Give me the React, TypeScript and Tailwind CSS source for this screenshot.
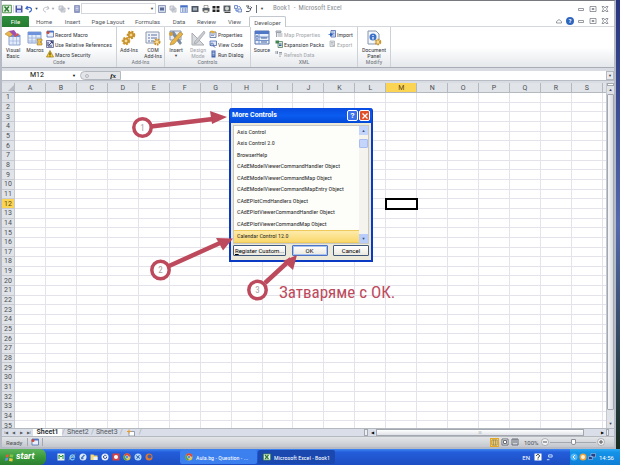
import { useState } from "react";
import type { ReactNode } from "react";
import clsx from "clsx";

const COLUMNS = "ABCDEFGHIJKLMNOPQRS".split("");
const ROWS = Array.from({ length: 35 }, (_, i) => i + 1);

const CONTROLS = [
  "Axis Control",
  "Axis Control 2.0",
  "BrowserHelp",
  "CAdEModelViewerCommandHandler Object",
  "CAdEModelViewerCommandMap Object",
  "CAdEModelViewerCommandMapEntry Object",
  "CAdEPlotCmdHandlers Object",
  "CAdEPlotViewerCommandHandler Object",
  "CAdEPlotViewerCommandMap Object",
  "Calendar Control 12.0",
];

const TABS = [
  { name: "Home", width: "w-[30px]" },
  { name: "Insert", width: "w-[27px]" },
  { name: "Page Layout", width: "w-[44px]" },
  { name: "Formulas", width: "w-[35px]" },
  { name: "Data", width: "w-[28px]" },
  { name: "Review", width: "w-[27px]" },
  { name: "View", width: "w-[29px]" },
  { name: "Developer", width: "w-[37px]" },
];

function Icon({ size = "size-2", children }: { size?: string; children: ReactNode }) {
  return (
    <svg viewBox="0 0 16 16" className={clsx(size, "shrink-0")} fill="none" aria-hidden="true">
      {children}
    </svg>
  );
}

/* Iconos */
const excelIcon = (
  <>
    <path d="M1 2h14v12H1z" fill="#e8f3e4" stroke="#4c8f4a" strokeWidth="1.5" />
    <path d="M4 4l7 8M11 4l-7 8" stroke="#2d7d35" strokeWidth="2.5" />
  </>
);
const saveIcon = (
  <>
    <path d="M1 1h13l1 2v12H1z" fill="#4a55a8" />
    <path d="M4 1h8v6H4z" fill="#e4e8fa" />
    <path d="M4 10h8v5H4z" fill="#c9cfee" />
  </>
);
const undoIcon = <path d="M5 2L2 7l5 2M3 7c5-5 11-1 10 3-1 3-3 4-5 4" stroke="#3f69c4" strokeWidth="2.5" />;
const redoIcon = <path d="M11 2l3 5-5 2M13 7C8 2 2 6 3 10c1 3 3 4 5 4" stroke="#b9bec6" strokeWidth="2" />;
const pageIcon = (
  <>
    <path d="M3 1h10v14H3z" fill="#8b98c4" stroke="#5c6b9e" />
    <path d="M5 4h6M5 7h6M5 10h6" stroke="#e6eaf8" strokeWidth="1.5" />
  </>
);
const groupIcon = (
  <>
    <path d="M2 2h8v8H2zM6 6h8v8H6z" fill="#e4e6ea" stroke="#a8adb7" strokeWidth="1.5" />
    <path d="M8 10h4" stroke="#a8adb7" strokeWidth="1.5" />
  </>
);
const formIcon = (
  <>
    <path d="M1 1h14v14H1z" fill="#d5dded" stroke="#7383a8" strokeWidth="1.5" />
    <path d="M4 5h8v6H4z" fill="#5a6c96" />
  </>
);
const tableIcon = (
  <>
    <path d="M1 1h14v14H1z" fill="#e5edfb" stroke="#5577c0" />
    <path d="M1 1h14v4H1z" fill="#456fc6" />
    <path d="M4 8h3M9 8h4M4 12h3M9 12h4" stroke="#4462a5" strokeWidth="2" />
  </>
);
const darkIcon = (
  <>
    <path d="M1 2h14v12H1z" fill="#4c5563" />
    <path d="M4 5h8v6H4z" fill="#a5b0bd" />
  </>
);
const printIcon = (
  <>
    <path d="M4 1h8v5H4z" fill="#fff" stroke="#555" />
    <path d="M1 6h14v7H1z" fill="#59616b" />
    <path d="M4 10h8v5H4z" fill="#e9e9dc" stroke="#555" />
  </>
);
const tilesIcon = <path d="M1 2h6v5H1zM9 2h6v5H9zM1 9h6v5H1zM9 9h6v5H9z" fill="#222" />;
const cameraIcon = (
  <>
    <path d="M1 1h14v12H1z" fill="#555c62" />
    <circle cx="8" cy="7" r="4" fill="#d0d3cf" />
    <path d="M3 15h12" stroke="#444" strokeWidth="2" />
  </>
);
const codeIcon = (
  <>
    <path d="M1 1h6v6H1zM8 8h7v6H8z" fill="#e8eefc" stroke="#5372b8" strokeWidth="1.5" />
    <path d="M9 3c4 0 4 2 4 4M4 8v4h4" stroke="#4b77cc" strokeWidth="2" />
  </>
);
const traceIcon = <path d="M2 2h6L5 6l7 1-3 6M2 13h6M11 3l3 3" stroke="#555b66" strokeWidth="2" />;
const recordIcon = (
  <>
    <path d="M2 2h13v12H2z" fill="#e9f0fc" stroke="#4767ad" strokeWidth="1.5" />
    <path d="M2 2h13v3H2z" fill="#4c74c6" />
    <circle cx="4" cy="5" r="3" fill="#cc4a3b" />
  </>
);
const relativeIcon = (
  <>
    <path d="M1 1h14v14H1z" fill="#d9def0" stroke="#565b85" strokeWidth="1.5" />
    <path d="M4 4v8h8M6 10l6-6M9 3h4v4" stroke="#3a4274" strokeWidth="2" />
  </>
);
const warningIcon = (
  <>
    <path d="M8 1l7 13H1z" fill="#f7cf3c" stroke="#9f7d13" strokeWidth="1.5" />
    <path d="M8 5v5M8 11v2" stroke="#3b3208" strokeWidth="2" />
  </>
);
const propertiesIcon = (
  <>
    <path d="M2 4h12v11H2z" fill="#eef2fb" stroke="#566a95" strokeWidth="1.5" />
    <path d="M4 8h8M4 11h6" stroke="#677ba8" strokeWidth="1.5" />
    <path d="M1 3l5-2 8 3-6 3z" fill="#e2ac3a" />
  </>
);
const viewCodeIcon = (
  <>
    <path d="M2 2h13v9H2z" fill="#dfe8fa" stroke="#4261a8" strokeWidth="1.5" />
    <circle cx="6" cy="9" r="3" fill="#aebfe5" stroke="#344f91" />
    <path d="M8 11l4 4" stroke="#344f91" strokeWidth="2" />
  </>
);
const runIcon = (
  <>
    <path d="M5 1h8v14H5z" fill="#4667ae" />
    <path d="M7 4h4M7 7h4M7 10h4" stroke="#dbe5fb" strokeWidth="1.5" />
  </>
);
const mapIcon = <path d="M2 2h10v3H2zM5 8h10M5 12h10M3 5v9" fill="#ccd0d6" stroke="#9ca3ad" strokeWidth="2" />;
const packIcon = (
  <>
    <path d="M6 3h9v12H6z" fill="#dce9dc" stroke="#53795e" strokeWidth="1.5" />
    <path d="M1 1h7v6H1z" fill="#3f8451" />
    <path d="M8 8h5M8 11h5" stroke="#315e9c" strokeWidth="2" />
  </>
);
const refreshIcon = <path d="M2 2v6M5 2v6M8 5h6M8 8h6M10 11v3" stroke="#959ca6" strokeWidth="2" />;
const importIcon = (
  <>
    <path d="M6 1h9v13H6z" fill="#e3ebfa" stroke="#3f5fa6" strokeWidth="1.5" />
    <path d="M8 4h5M8 7h5M8 10h5" stroke="#5f7cba" strokeWidth="1.5" />
    <path d="M1 9h6M5 6l4 3-4 3z" fill="#2860bb" stroke="#2860bb" strokeWidth="1.5" />
  </>
);
const exportIcon = (
  <path d="M4 2h9v11H4zM6 5h5M6 8h5M9 11h5" fill="#e3e5e8" stroke="#a7acb4" strokeWidth="1.5" />
);
const vbIcon = (
  <>
    <path d="M4 5h11v10H4z" fill="#e3ecfb" stroke="#8ba0cb" />
    <path d="M4 5h11v2H4z" fill="#6f92dc" />
    <path d="M8 7v8M11.5 7v8M4 11h11" stroke="#9db2dd" strokeWidth=".7" />
    <path d="M0 4l4-3 4 3-3 3z" fill="#e9b64a" stroke="#a87c28" strokeWidth=".5" />
    <path d="M4 1l5-1 3 4-3 2z" fill="#a04eb0" />
    <path d="M9 6l4-3 1 2-4 2z" fill="#d3564a" />
  </>
);
const macrosIcon = (
  <>
    <path d="M1 2h13v11H1z" fill="#e3ecfb" stroke="#8ba0cb" />
    <path d="M1 2h13v3H1z" fill="#6f92dc" />
    <path d="M5 5v8M9 5v8M1 8h13M1 11h13" stroke="#93abd6" strokeWidth=".7" />
    <path d="M10 9h5v2l-2 1 2 1v2h-5l1-3z" fill="#efc04a" stroke="#9b7a2b" strokeWidth=".6" />
  </>
);
const gearsIcon = (
  <>
    <circle cx="10" cy="5" r="3.2" fill="#f2d48a" stroke="#c6902b" strokeWidth="2.2" strokeDasharray="2 1" />
    <circle cx="10" cy="5" r="2.2" stroke="#c6902b" strokeWidth="1.5" />
    <circle cx="5" cy="11" r="3.2" fill="#f4dca0" stroke="#d1a03c" strokeWidth="2.2" strokeDasharray="2 1" />
    <circle cx="5" cy="11" r="2.2" stroke="#c6902b" strokeWidth="1.5" />
  </>
);
const comIcon = (
  <>
    <path d="M1 2h13v11H1z" fill="#f1f4fa" stroke="#8c98ad" />
    <path d="M3 5h2M3 8h2M3 11h2M6 5h6M6 8h6M6 11h3" stroke="#5c73a3" />
    <circle cx="12" cy="12" r="2.5" fill="#f5dc9c" stroke="#c6902b" strokeWidth="2" strokeDasharray="1.6 .8" />
  </>
);
const toolsIcon = (
  <>
    <path d="M2 1h11v9H2z" fill="#e8edf6" stroke="#8996ae" />
    <path d="M2 2l4-1 8 12-2 2z" fill="#7d8ca5" />
    <path d="M12 2l3 2-9 10-4 1 1-3z" fill="#e8b446" stroke="#a67f2b" strokeWidth=".6" />
    <circle cx="3" cy="4" r="2" fill="#d6a038" />
  </>
);
const designIcon = (
  <>
    <path d="M2 3v12h12z" fill="#d9dbde" stroke="#a8abb0" />
    <path d="M5 9v3h3z" fill="#fff" />
    <path d="M14 1L5 11l-1 3 3-1 8-10z" fill="#c8cbd0" stroke="#a0a4aa" strokeWidth=".7" />
  </>
);
const sourceIcon = (
  <>
    <path d="M1 1h14v13H1z" fill="#eaf1fd" stroke="#5673ad" />
    <path d="M1 1h14v3H1z" fill="#4f78c6" />
    <path d="M5 4v10M1 7h14M1 10.5h14" stroke="#7794cb" />
    <path d="M7 8h6M7 12h6M2 6h2M2 9h2" stroke="#40609f" />
  </>
);
const documentIcon = (
  <>
    <path d="M2 1h8l3 3v10H2z" fill="#f4f7fc" stroke="#8593ad" />
    <circle cx="7" cy="7" r="3.5" fill="#3e72c9" />
    <path d="M7 5v1M7 7v2.5" stroke="#fff" strokeWidth="1.2" />
    <circle cx="12" cy="12" r="2.3" fill="#f5dc9c" stroke="#c9972f" strokeWidth="2" strokeDasharray="1.6 .7" />
  </>
);

function BigButton({ icon, lines, arrow, disabled, width }: {
  icon: ReactNode;
  lines: string[];
  arrow?: boolean;
  disabled?: boolean;
  width: string;
}) {
  return (
    <button
      disabled={disabled}
      className={clsx("flex shrink-0 flex-col items-center leading-[6px] whitespace-nowrap", width, disabled && "text-[#a6a9ae]")}
    >
      <span className="mb-px flex h-[17px] items-center">
        <Icon size="size-4">{icon}</Icon>
      </span>
      {lines.map((line) => (
        <span key={line}>{line}</span>
      ))}
      {arrow && <span className="text-[4px]">▼</span>}
    </button>
  );
}

function SmallButton({ icon, label, disabled }: { icon: ReactNode; label: string; disabled?: boolean }) {
  return (
    <button
      disabled={disabled}
      className={clsx("flex h-[10px] items-center gap-px whitespace-nowrap", disabled && "text-[#a6a9ae]")}
    >
      <Icon>{icon}</Icon>
      {label}
    </button>
  );
}

function Group({ title, width, children }: { title: string; width: string; children: ReactNode }) {
  return (
    <section className={clsx("flex shrink-0 flex-col border-r border-[#cdd1d8]", width)}>
      <div className="flex flex-1 gap-[2px] pt-[2px]">{children}</div>
      <h2 className="h-[8px] text-center leading-[6px] text-[#73777e]">{title}</h2>
    </section>
  );
}

function TitleBar() {
  return (
    <div className="flex h-[15px] items-center pr-1">
      <div className="flex w-[79px] items-center">
        <Icon size="size-[10px]">{excelIcon}</Icon>
        <span className="mx-px h-2 w-px bg-gray-300" />
        <Icon>{saveIcon}</Icon>
        <span className="w-[3px]" />
        <Icon>{undoIcon}</Icon>
        <span className="mx-px text-[4px] text-gray-700">▼</span>
        <span className="w-[3px]" />
        <Icon>{redoIcon}</Icon>
        <span className="mx-px text-[4px] text-gray-400">▼</span>
        <span className="w-[3px]" />
        <Icon>{groupIcon}</Icon>
        <span className="text-[4px] text-gray-400">▼</span>
        <span className="w-[3px]" />
        <Icon>{pageIcon}</Icon>
      </div>
      <label className="relative flex">
        <select aria-label="Font" className="h-[11px] w-[75px] appearance-none border border-[#d3d6db] bg-white">
          <option></option>
        </select>
        <span className="pointer-events-none absolute top-[3px] right-[2px] text-[4px]">▼</span>
      </label>
      <div className="ml-[2px] flex w-[106px] items-center justify-between">
        {[formIcon, groupIcon, tableIcon, darkIcon, printIcon, tilesIcon, cameraIcon, codeIcon, traceIcon].map((icon, i) => (
          <button key={i} aria-label={`Quick command ${i + 1}`}>
            <Icon>{icon}</Icon>
          </button>
        ))}
        <span className="h-2 w-px bg-gray-500" />
        <span className="text-[4px]">▼</span>
      </div>
      <h1 className="ml-[9px] flex-1 font-['Roboto_Condensed','Roboto',sans-serif] text-[7px] whitespace-pre text-[#8b8e94]">
        Book1  -  Microsoft Excel
      </h1>
      <WindowButtons />
    </div>
  );
}

function WindowButtons() {
  return (
    <div className="flex gap-[4px] pr-px">
      <button aria-label="Minimize">
        <Icon><path d="M3 7h10v4H3z" stroke="#777b83" strokeWidth="1.5" /></Icon>
      </button>
      <button aria-label="Restore">
        <Icon><path d="M2 3h12v10H2zM6 7h4v2H6z" stroke="#777b83" strokeWidth="1.5" /></Icon>
      </button>
      <button aria-label="Close">
        <Icon><path d="M2 3h4l2 3 2-3h4l-3 5 3 5h-4l-2-3-2 3H2l3-5z" stroke="#777b83" strokeWidth="1.5" /></Icon>
      </button>
    </div>
  );
}

function TabBar() {
  return (
    <nav className="flex h-[11px] text-[#55585e]">
      <button className="w-[27px] rounded-t-[1px] bg-linear-to-b from-[#2f8f3f] to-[#257c31] text-white">File</button>
      {TABS.map((tab) => (
        <button
          key={tab.name}
          className={clsx(
            "whitespace-nowrap",
            tab.width,
            tab.name === "Developer"
              ? "rounded-t-[2px] border border-b-0 border-[#c3c7ce] bg-white"
              : "border-b border-[#d4d7dc]",
          )}
        >
          {tab.name}
        </button>
      ))}
      <div className="flex flex-1 items-center justify-end gap-[3px] border-b border-[#d4d7dc] pr-1">
        <Icon><path d="M3 9l5-4 5 4v3H3z" stroke="#777b83" strokeWidth="1.5" /></Icon>
        <button aria-label="Help" className="size-2 rounded-full bg-[#2f66bd] text-center leading-2 font-bold text-white">?</button>
        <WindowButtons />
      </div>
    </nav>
  );
}

function Ribbon() {
  return (
    <div className="flex h-[41px] border-b border-[#a9adb5] bg-linear-to-b from-white from-50% to-[#e5e8ec] font-['Roboto_Condensed','Roboto',sans-serif]">
      <Group title="Code" width="w-[115px]">
        <BigButton icon={vbIcon} lines={["Visual", "Basic"]} width="w-[22px]" />
        <BigButton icon={macrosIcon} lines={["Macros"]} width="w-[18px]" />
        <div>
          <SmallButton icon={recordIcon} label="Record Macro" />
          <SmallButton icon={relativeIcon} label="Use Relative References" />
          <SmallButton icon={warningIcon} label="Macro Security" />
        </div>
      </Group>
      <Group title="Add-Ins" width="w-[48px]">
        <BigButton icon={gearsIcon} lines={["Add-Ins"]} width="w-[24px]" />
        <BigButton icon={comIcon} lines={["COM", "Add-Ins"]} width="w-[20px]" />
      </Group>
      <Group title="Controls" width="w-[86px]">
        <BigButton icon={toolsIcon} lines={["Insert"]} width="w-[22px]" arrow />
        <BigButton icon={designIcon} lines={["Design", "Mode"]} width="w-[18px]" disabled />
        <div>
          <SmallButton icon={propertiesIcon} label="Properties" />
          <SmallButton icon={viewCodeIcon} label="View Code" />
          <SmallButton icon={runIcon} label="Run Dialog" />
        </div>
      </Group>
      <Group title="XML" width="w-[107px]">
        <BigButton icon={sourceIcon} lines={["Source"]} width="w-[22px]" />
        <div className="w-[51px]">
          <SmallButton icon={mapIcon} label="Map Properties" disabled />
          <SmallButton icon={packIcon} label="Expansion Packs" />
          <SmallButton icon={refreshIcon} label="Refresh Data" disabled />
        </div>
        <div>
          <SmallButton icon={importIcon} label="Import" />
          <SmallButton icon={exportIcon} label="Export" disabled />
        </div>
      </Group>
      <Group title="Modify" width="w-[33px]">
        <BigButton icon={documentIcon} lines={["Document", "Panel"]} width="w-full" />
      </Group>
    </div>
  );
}

function FormulaBar() {
  return (
    <div className="mt-[3px] mb-[2px] flex h-[10px] border-b border-[#b8bcc4] bg-white">
      <input aria-label="Name box" defaultValue="M12" className="w-[70px] text-center text-[7px] text-black outline-none" />
      <span className="w-2 text-[4px] leading-[10px] text-black">▼</span>
      <div className="flex w-[41px] items-center justify-between rounded-l-full border border-[#b4b8bf] bg-[#e3e5e9] px-1">
        <span className="size-1 rounded-full border border-[#b4b8bf]" />
        <span className="font-['Liberation_Serif'] text-[7px] leading-[8px] font-bold text-black italic">fx</span>
      </div>
      <input aria-label="Formula" className="min-w-0 flex-1 outline-none" />
      <button aria-label="Expand formula bar" className="w-2 border border-[#b4b8bf] bg-[#e8eaee] text-[4px] leading-2">▼</button>
    </div>
  );
}

function Sheet() {
  return (
    <div className="flex min-h-0 flex-1 overflow-hidden">
      <div className="min-w-0 flex-1 overflow-hidden bg-white">
        <table className="h-[348px] w-full table-fixed border-separate border-spacing-0 text-center text-[7px] leading-[8px] text-[#4a4e55]">
          <thead>
            <tr>
              <th className="h-[10px] w-[13px] border-r border-b border-[#b4b8bf] bg-[#e0e3e7] p-0">
                <svg viewBox="0 0 6 6" className="ml-auto size-[6px]"><path d="M6 0v6H0z" fill="#b6bac2" /></svg>
              </th>
              {COLUMNS.map((col) => (
                <th
                  key={col}
                  scope="col"
                  className={clsx(
                    "h-[10px] border-r border-b border-[#b4b8bf] p-0 font-normal",
                    col === "M" ? "bg-[#fcd453] text-[#5b4710]" : "bg-[#e0e3e7]",
                  )}
                >
                  {col}
                </th>
              ))}
              <th className="w-[3px] border-b border-[#b4b8bf] bg-[#e0e3e7] p-0" />
            </tr>
          </thead>
          <tbody>
            {ROWS.map((row) => (
              <tr key={row}>
                <th
                  scope="row"
                  className={clsx(
                    "border-r border-b border-[#c6cad0] p-0 font-normal",
                    row === 12 ? "bg-[#fcd453] text-[#5b4710]" : "bg-[#e0e3e7]",
                  )}
                >
                  {row}
                </th>
                {COLUMNS.map((col) => (
                  <td
                    key={col}
                    className={clsx(
                      "border-r border-b border-[#e4e3eb] p-0",
                      row === 12 && col === "M" && "outline-2 -outline-offset-1 outline-black",
                    )}
                  />
                ))}
                <td className="border-b border-[#e4e3eb] p-0" />
              </tr>
            ))}
          </tbody>
        </table>
      </div>
      <div className="flex w-2 flex-col items-center border-l border-[#c3c7ce] bg-[#dfe2e7] text-[4px] leading-[8px]">
        <span className="h-[3px] w-full border border-[#a3a8b0] bg-white" />
        <span>▲</span>
        <span className="w-full flex-1 rounded-[1px] border border-[#a3a8b0] bg-linear-to-r from-[#f6f7f8] to-[#d9dce1]" />
        <span className="mt-[10px]">▼</span>
      </div>
    </div>
  );
}

function SheetTabs() {
  return (
    <div className="flex h-[8px] items-center border-t border-[#b4b8bf] bg-[#d9dee8] text-[7px] leading-[7px] text-[#555961]">
      <div className="flex w-[31px] justify-around text-[4px]">
        <span>|◀</span>
        <span>◀</span>
        <span>▶</span>
        <span>▶|</span>
      </div>
      <button className="h-full w-[29px] bg-white font-bold text-[#33363b]">Sheet1</button>
      <span className="text-[#a3a8b0]">/</span>
      <button className="w-[26px]">Sheet2</button>
      <span className="text-[#a3a8b0]">/</span>
      <button className="w-[26px]">Sheet3</button>
      <span className="text-[#a3a8b0]">/</span>
      <button aria-label="Insert sheet" className="mx-[4px]">
        <Icon>
          <path d="M4 5h11v9H4z" fill="#fff" stroke="#7584a3" strokeWidth="1.5" />
          <path d="M4 1v8M0 5h8" stroke="#e59b2e" strokeWidth="2" />
        </Icon>
      </button>
      <span className="text-[#a3a8b0]">/</span>
      <div className="ml-auto flex h-full w-[250px] items-center text-[4px] text-black">
        <span className="h-full w-[4px] border border-[#a3a8b0] bg-[#eceef1]" />
        <span className="w-2 text-center">◀</span>
        <span className="flex h-full w-[208px] items-center justify-center border border-[#a3a8b0] bg-linear-to-b from-white to-[#dfe2e7] text-[#8b9098]">|||</span>
        <span className="ml-auto w-2 text-center">▶</span>
        <span className="mr-[5px] h-full w-[3px] border border-[#a3a8b0] bg-[#eceef1]" />
      </div>
    </div>
  );
}

function StatusBar() {
  return (
    <footer className="flex h-[11px] items-center border-t border-[#b4b8bf] bg-linear-to-b from-[#e3e5e8] to-[#c4c8ce] text-[#4d5158]">
      <span className="w-[25px] pl-1">Ready</span>
      <span className="h-2 w-px bg-[#a3a8b0]" />
      <span className="flex w-[14px] justify-center"><Icon>{recordIcon}</Icon></span>
      <span className="h-2 w-px bg-[#a3a8b0]" />
      <div className="ml-auto flex items-center gap-[2px]">
        <button aria-label="Normal" className="flex h-[9px] w-[9px] items-center justify-center border border-[#e6a723] bg-[#fddc83]">
          <Icon size="size-[7px]"><path d="M2 2h12v12H2zM6 2v12M10 2v12" stroke="#80703d" strokeWidth="1.5" /></Icon>
        </button>
        <button aria-label="Page layout">
          <Icon><path d="M2 2h12v12H2zM5 5h6v6H5z" fill="#fff" stroke="#686d76" strokeWidth="2" /></Icon>
        </button>
        <button aria-label="Page break preview">
          <Icon><path d="M2 2h12v12H2zM6 2v8M10 2v8" stroke="#686d76" strokeWidth="2" /></Icon>
        </button>
      </div>
      <span className="ml-[5px] w-[17px]">100%</span>
      <button aria-label="Zoom out"><Icon><circle cx="8" cy="8" r="7" fill="#f4f5f6" stroke="#777b83" /><path d="M4 8h8" stroke="#555" strokeWidth="2" /></Icon></button>
      <input
        type="range"
        aria-label="Zoom"
        defaultValue={50}
        className="mx-px h-[8px] w-[46px] appearance-none bg-[linear-gradient(#a3a8b0,#a3a8b0)] bg-[length:100%_1px] bg-center bg-no-repeat [&::-webkit-slider-thumb]:h-[6px] [&::-webkit-slider-thumb]:w-[5px] [&::-webkit-slider-thumb]:appearance-none [&::-webkit-slider-thumb]:rounded-b-[2px] [&::-webkit-slider-thumb]:border [&::-webkit-slider-thumb]:border-[#8b9098] [&::-webkit-slider-thumb]:bg-white"
      />
      <button aria-label="Zoom in"><Icon><circle cx="8" cy="8" r="7" fill="#f4f5f6" stroke="#777b83" /><path d="M4 8h8M8 4v8" stroke="#555" strokeWidth="2" /></Icon></button>
      <span className="w-[9px]" />
    </footer>
  );
}

function DialogButton({ width, primary, children }: { width: string; primary?: boolean; children: ReactNode }) {
  return (
    <button
      className={clsx(
        "h-[11px] rounded-[1px] border bg-linear-to-b from-white to-[#eae8df] font-['Roboto',sans-serif] leading-[8px] whitespace-nowrap text-black",
        primary ? "border-[#4a72c4] ring-1 ring-[#a9c2f0] ring-inset" : "border-[#40587d]",
        width,
      )}
    >
      {children}
    </button>
  );
}

function ControlsDialog() {
  const [selected, setSelected] = useState("Calendar Control 12.0");

  return (
    <div
      role="dialog"
      aria-label="More Controls"
      className="absolute top-[108px] left-[229px] w-[144px] rounded-t-[3px] border-2 border-t-0 border-[#0b3bc4] bg-[#ece9d8] font-['Roboto_Condensed','Roboto',sans-serif]"
    >
      <div className="-mx-px flex h-[15px] items-center gap-px rounded-t-[2px] bg-linear-to-b from-[#0a4be0] via-[#0a5cf0] to-[#0449d8] px-[2px] font-['Roboto',sans-serif] text-[7px] font-bold text-white">
        <span className="flex-1">More Controls</span>
        <button aria-label="Help" className="size-[11px] rounded-[2px] border border-white bg-[#3c70ea] text-[8px] leading-[8px]">?</button>
        <button aria-label="Close" className="flex size-[11px] items-center justify-center rounded-[2px] border border-white bg-[#e0512b]">
          <Icon><path d="M3 3l10 10M13 3L3 13" stroke="#fff" strokeWidth="2.5" /></Icon>
        </button>
      </div>
      <div className="px-[2px] pt-[2px] pb-[4px]">
        <div className="flex h-[119px] border border-[#c6c9c8] bg-[#fdfdfa]">
          <ul role="listbox" aria-label="Controls" className="flex flex-1 flex-col">
            {CONTROLS.map((name) => (
              <li
                key={name}
                role="option"
                aria-selected={name === selected}
                onClick={() => setSelected(name)}
                className={clsx(
                  "flex flex-1 items-center pl-[3px] leading-[8px] whitespace-nowrap text-[#2b2b2b]",
                  name === selected && "border-y border-[#eec95c] bg-linear-to-b from-[#fdebaa] to-[#fad86c]",
                )}
              >
                {name}
              </li>
            ))}
          </ul>
          <div className="flex w-[9px] flex-col bg-[#f4f3ee] text-center text-[4px] leading-[9px] text-[#33507e]">
            <button aria-label="Scroll up" className="h-[9px] bg-[#c4d4fb]">▲</button>
            <span className="mt-[4px] h-[9px] rounded-[1px] border border-[#a9bdf2] bg-[#c4d4fb]" />
            <button aria-label="Scroll down" className="mt-auto h-[9px] bg-[#b9ccfa]">▼</button>
          </div>
        </div>
        <div className="mt-px flex justify-between">
          <DialogButton width="w-[53px]"><u>R</u>egister Custom...</DialogButton>
          <DialogButton width="w-[36px]" primary>OK</DialogButton>
          <DialogButton width="w-[36px]">Cancel</DialogButton>
        </div>
      </div>
    </div>
  );
}

function Callouts() {
  return (
    <div className="pointer-events-none absolute top-[100px] left-[120px] font-['Roboto_Condensed','Roboto',sans-serif] text-[#bd4a5c]">
      <svg viewBox="0 0 280 210" className="h-[210px] w-[280px]">
        <g stroke="currentColor" strokeWidth="4.5">
          <path d="M31 26.5L93 19M49 166l51-23M145 183l26-24" />
        </g>
        <g fill="currentColor">
          <path d="M90 11l17 6-15 7z" />
          <path d="M96 138l17 .5-10 12z" />
          <path d="M163 161l14-6-4 15z" />
        </g>
        <g fill="#fff" stroke="currentColor" strokeWidth="3.5">
          <circle cx="22.5" cy="27.5" r="8.7" />
          <circle cx="40.5" cy="170" r="8.7" />
          <circle cx="137.5" cy="190" r="8.7" />
        </g>
        <g fill="#a79c9e" fontSize="9" textAnchor="middle">
          <text x="22.5" y="31">1</text>
          <text x="40.5" y="173">2</text>
          <text x="137.5" y="193">3</text>
        </g>
      </svg>
      <p className="absolute top-[180px] left-[159px] text-[17px] leading-[24px] whitespace-nowrap">
        Затваряме с ОК.
      </p>
    </div>
  );
}

function TrayIcon({ color, children }: { color: string; children?: ReactNode }) {
  return (
    <Icon>
      <circle cx="8" cy="8" r="7" fill={color} />
      {children}
    </Icon>
  );
}

const chromeIcon = (
  <>
    <circle cx="8" cy="8" r="7" fill="#e9c33c" />
    <path d="M8 8L2 4a7 7 0 0 1 13 3z" fill="#d9493a" />
    <path d="M8 8L2 4a7 7 0 0 0 5 11z" fill="#4fa452" />
    <circle cx="8" cy="8" r="3" fill="#3f79d8" stroke="#fff" />
  </>
);

function Taskbar() {
  return (
    <div className="flex h-4 shrink-0 items-center bg-linear-to-b from-[#3f86f2] via-[#245ddb] via-20% to-[#1c4ec2] text-white">
      <button className="flex h-full w-[46px] items-center gap-[2px] rounded-r-[6px] bg-linear-to-b from-[#5bb35a] via-[#3a9a3b] to-[#2c7f2e] pl-[5px] text-[9px] font-bold italic">
        <Icon size="size-[9px]">
          <path d="M2 3l5-1-1 5-5 1z" fill="#e8593a" />
          <path d="M9 2l6 1-1 5-6-1z" fill="#7cc544" />
          <path d="M1 9l5-1-1 5-5 1z" fill="#5b95ee" />
          <path d="M8 9l6 1-1 5-6-1z" fill="#f5cb3b" />
        </Icon>
        start
      </button>
      <div className="flex w-[134px] items-center gap-[3px] pl-[11px]">
        <Icon><path d="M1 1h14v14H1z" fill="#e6f6e6" /><path d="M4 12V4l4 4 4-4v8" stroke="#228a3c" strokeWidth="2" /></Icon>
        <Icon><path d="M13 11c-3 5-10 2-9-3s9-6 9 0H4" stroke="#7cc9fa" strokeWidth="2.5" /><path d="M1 14L15 2" stroke="#f4d262" /></Icon>
        <TrayIcon color="#dceafa"><path d="M5 10l6-6M4 11h5" stroke="#4878c2" strokeWidth="3" /></TrayIcon>
        <Icon><path d="M1 3h6l1 2h7v9H1z" fill="#f4d878" /><path d="M7 8h8v6H7z" fill="#e9f1fd" /></Icon>
        <TrayIcon color="#e8eefb"><path d="M11 6c-3-3-6-1-6 2s4 4 6 2V8" stroke="#2c449a" strokeWidth="2" /></TrayIcon>
        <Icon><path d="M1 1h14v14H1z" fill="#dd4139" /><circle cx="8" cy="8" r="4" fill="#fff" /></Icon>
        <Icon>{chromeIcon}</Icon>
        <TrayIcon color="#b4d6fa"><path d="M4 5l8 6M11 4l-6 8" stroke="#2c66bd" strokeWidth="2" /></TrayIcon>
        <TrayIcon color="#e2772c"><circle cx="9" cy="7" r="4" fill="#3a61b4" /></TrayIcon>
      </div>
      <button className="flex h-[14px] w-[77px] items-center gap-[3px] rounded-[2px] bg-[#3c80f0] pl-[5px] font-['Roboto_Condensed','Roboto',sans-serif] whitespace-nowrap">
        <Icon>{chromeIcon}</Icon>
        Aula.bg - Question - ...
      </button>
      <button className="ml-px flex h-[14px] w-[77px] items-center gap-[3px] rounded-[2px] bg-[#1a48ae] pl-[5px] font-['Roboto_Condensed','Roboto',sans-serif] whitespace-nowrap">
        <Icon>{excelIcon}</Icon>
        Microsoft Excel - Book1
      </button>
      <div className="ml-auto flex items-center gap-1">
        <span>EN</span>
        <Icon><path d="M1 1h14v14H1z" fill="#fff" /><path d="M5 6c0-4 6-4 6 0 0 2-3 2-3 4M8 11v2" stroke="#222" strokeWidth="2" /></Icon>
        <Icon size="size-[7px]"><path d="M6 2h8v5H6zM2 13h6" stroke="#dce9ff" strokeWidth="2" /></Icon>
      </div>
      <div className="ml-[17px] flex h-full w-[50px] items-center gap-px bg-linear-to-b from-[#2eaaf6] via-[#1493e8] via-20% to-[#0f7fd6]">
        <Icon><circle cx="8" cy="8" r="7" fill="#4fb6f8" /><path d="M10 4L6 8l4 4" stroke="#fff" strokeWidth="2" /></Icon>
        <TrayIcon color="#f1a238"><circle cx="8" cy="8" r="4" fill="#fbf3e1" /></TrayIcon>
        <Icon><path d="M6 1h9v7H6zM1 7h8v6H1z" fill="#243f86" stroke="#b9d4f7" /></Icon>
        <span className="ml-[2px]">14:56</span>
      </div>
    </div>
  );
}

export default function App() {
  return (
    <div className="relative flex h-screen flex-col overflow-hidden font-['Roboto',sans-serif] text-[6px] text-[#3c4047]">
      <div className="flex min-h-0 flex-1">
        <main className="flex min-w-0 flex-1 flex-col border-x-2 border-t border-b-2 border-[#b5bac4] border-t-[#777980] bg-[#d9dce2]">
          <header className="bg-white">
            <TitleBar />
            <TabBar />
            <Ribbon />
          </header>
          <FormulaBar />
          <Sheet />
          <SheetTabs />
          <StatusBar />
        </main>
        <div className="w-1 bg-linear-to-b from-[#27357c] via-[#5468ae] to-[#182c20]" />
      </div>
      <Taskbar />
      <ControlsDialog />
      <Callouts />
    </div>
  );
}
